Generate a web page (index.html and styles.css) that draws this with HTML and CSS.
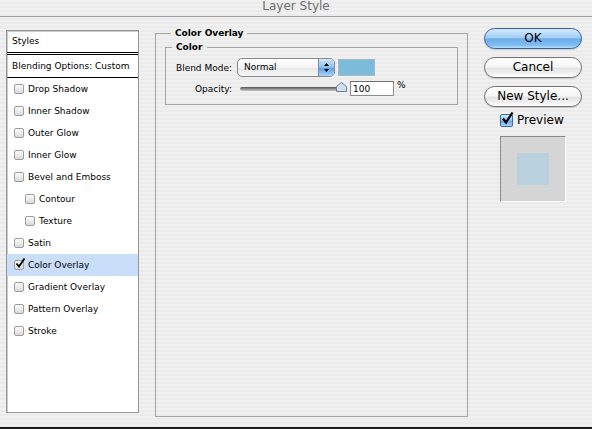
FILE: index.html
```html
<!DOCTYPE html>
<html lang="en">
<head>
<meta charset="UTF-8">
<title>Layer Style</title>
<link rel="stylesheet" href="styles.css">
</head>
<body>
<div class="window">
    <div class="titlebar">Layer Style</div>
    <div class="dialog">
        <div class="style-list">
            <div class="list-head">Styles</div>
            <div class="list-blend">Blending Options: Custom</div>
            <ul class="effects">
                <li><span class="check"></span>Drop Shadow</li>
                <li><span class="check"></span>Inner Shadow</li>
                <li><span class="check"></span>Outer Glow</li>
                <li><span class="check"></span>Inner Glow</li>
                <li><span class="check"></span>Bevel and Emboss</li>
                <li class="sub"><span class="check"></span>Contour</li>
                <li class="sub"><span class="check"></span>Texture</li>
                <li><span class="check"></span>Satin</li>
                <li class="selected"><span class="check"><svg width="12" height="12" viewBox="0 0 12 12"><path d="M2.5 5.5 L5 8.5 L10.5 0.5" fill="none" stroke="#000" stroke-width="1.8"/></svg></span>Color Overlay</li>
                <li><span class="check"></span>Gradient Overlay</li>
                <li><span class="check"></span>Pattern Overlay</li>
                <li><span class="check"></span>Stroke</li>
            </ul>
        </div>

        <fieldset class="group">
            <legend>Color Overlay</legend>
            <fieldset class="subgroup">
                <legend>Color</legend>
                <div class="form-grid">
                    <label>Blend Mode:</label>
                    <div class="row">
                        <div class="popup">
                            <span class="popup-value">Normal</span>
                            <span class="popup-arrows"><svg width="7" height="11" viewBox="0 0 7 11"><path d="M3.5 1 L6 4 L1 4 Z M3.5 10 L6 7 L1 7 Z" fill="#000"/></svg></span>
                        </div>
                        <div class="swatch"></div>
                    </div>
                    <label>Opacity:</label>
                    <div class="row">
                        <div class="slider">
                            <div class="track"></div>
                            <svg class="thumb" width="11" height="10" viewBox="0 0 11 10"><path d="M5.5 0.5 L10.5 4.5 L10.5 9.5 L0.5 9.5 L0.5 4.5 Z" fill="#cfe0f0" stroke="#6c7f93"/></svg>
                        </div>
                        <input class="num" type="text" value="100">
                        <span class="unit">%</span>
                    </div>
                </div>
            </fieldset>
        </fieldset>

        <div class="actions">
            <button class="btn default">OK</button>
            <button class="btn">Cancel</button>
            <button class="btn">New Style...</button>
            <label class="preview-toggle"><span class="aqua-check"><svg width="14" height="14" viewBox="0 0 14 14"><path d="M3 6.5 L6 10.5 L12.5 0.5" fill="none" stroke="#000" stroke-width="2.2"/></svg></span>Preview</label>
            <div class="preview"><div class="preview-swatch"></div></div>
        </div>
    </div>
</div>
</body>
</html>
```

FILE: styles.css
```css
body {
    margin: 0;
    font-family: 'DejaVu Sans', sans-serif;
    font-size: 9px;
    color: #000;
    background: #efefef;
}
.window {
    width: 592px;
    height: 429px;
    box-sizing: border-box;
    border-bottom: 2px solid #1c1c1c;
    overflow: hidden;
    background: repeating-linear-gradient(to bottom, #f0f0f0 0, #f0f0f0 2px, #ebebeb 2px, #ebebeb 4px);
}
.titlebar {
    height: 16px;
    line-height: 12px;
    text-align: center;
    font-size: 12px;
    color: #6e6e6e;
    border-bottom: 1px solid #9e9e9e;
}
.dialog {
    display: flex;
    align-items: flex-start;
    padding: 10px 0 0 6px;
}

/* style list */
.style-list {
    margin-top: 3px;
    width: 133px;
    height: 383px;
    box-sizing: border-box;
    border: 1px solid #969696;
    box-shadow: inset 1px 1px 0 #cacaca;
    background: #fff;
}
.list-head {
    height: 21px;
    line-height: 21px;
    padding-left: 5px;
    border-bottom: 3px double #000;
}
.list-blend {
    height: 22px;
    line-height: 22px;
    padding-left: 5px;
    border-bottom: 1px solid #000;
}
.effects {
    list-style: none;
    margin: 0;
    padding: 0;
}
.effects li {
    height: 22px;
    display: flex;
    align-items: center;
    gap: 4px;
    padding-left: 7px;
}
.effects li.sub {
    padding-left: 18px;
}
.effects li.selected {
    background: #cadef9;
}
.check {
    position: relative;
    width: 10px;
    height: 10px;
    box-sizing: border-box;
    border: 1px solid #9d9d9d;
    border-radius: 2px;
    background: linear-gradient(#fdfdfd, #d9d9d9);
}
.check svg {
    position: absolute;
    left: -1px;
    top: -3px;
}

/* groups */
.group {
    margin: 0 0 0 16px;
    padding: 1px 9px 0;
    width: 313px;
    height: 390px;
    box-sizing: border-box;
    border: 1px solid #a5a5a5;
    min-width: 0;
}
.group legend,
.subgroup legend {
    padding: 0 4px;
    margin-left: 6px;
    line-height: 13px;
    font-weight: bold;
}
.subgroup {
    margin: 0;
    padding: 4px 0 8px;
    border: 1px solid #a5a5a5;
    min-width: 0;
}
.form-grid {
    display: grid;
    grid-template-columns: 66px 1fr;
    column-gap: 5px;
    row-gap: 4px;
}
.form-grid label {
    justify-self: end;
    align-self: center;
}
.row {
    display: flex;
    align-items: center;
}
.popup {
    display: flex;
    width: 98px;
    height: 19px;
    box-sizing: border-box;
    border: 1px solid #8a8a8a;
    border-radius: 5px;
    overflow: hidden;
    background: linear-gradient(#ffffff, #f4f4f4 50%, #e6e6e6 51%, #f7f7f7);
}
.popup-value {
    flex: 1;
    line-height: 17px;
    padding-left: 6px;
}
.popup-arrows {
    width: 15px;
    display: flex;
    align-items: center;
    justify-content: center;
    border-left: 1px solid #6f8fb8;
    background: linear-gradient(#d3e6fa, #8dbdf0 50%, #5c9de6 51%, #a9d3f8);
}
.swatch {
    margin-left: 3px;
    width: 37px;
    height: 17px;
    box-sizing: border-box;
    border: 1px solid #a3b9c5;
    background: #7dbcd9;
}
.slider {
    position: relative;
    margin-left: 3px;
    width: 107px;
    height: 15px;
    display: flex;
    align-items: center;
}
.track {
    width: 104px;
    height: 4px;
    border-radius: 2px;
    background: linear-gradient(#555, #9a9a9a 60%, #cfcfcf);
}
.thumb {
    position: absolute;
    right: 0;
    top: 1px;
}
.num {
    margin-left: 3px;
    width: 44px;
    height: 15px;
    box-sizing: border-box;
    border: 1px solid #8c8c8c;
    border-top-color: #6d6d6d;
    padding: 0 2px;
    font-family: 'DejaVu Sans', sans-serif;
    font-size: 9px;
    background: #fff;
}
.unit {
    margin-left: 3px;
    align-self: flex-start;
    margin-top: -1px;
}

/* buttons and preview */
.actions {
    margin: 1px 0 0 16px;
    width: 98px;
    display: flex;
    flex-direction: column;
}
.btn {
    height: 21px;
    margin: 0 0 8px;
    padding: 0;
    box-sizing: border-box;
    border: 1px solid #707070;
    border-radius: 11px;
    font-family: 'DejaVu Sans', sans-serif;
    font-size: 12px;
    line-height: 19px;
    color: #000;
    background: linear-gradient(#ffffff, #f6f6f6 45%, #e4e4e4 55%, #f3f3f3 85%, #ffffff);
    box-shadow: 0 1px 1px rgba(0, 0, 0, 0.15);
}
.btn.default {
    border-color: #37609e;
    background: linear-gradient(#d6eafc, #a2cff5 45%, #6eaceb 52%, #7fbcf1 85%, #b7e0fd);
}
.preview-toggle {
    margin: -3px 0 0 16px;
    display: flex;
    align-items: center;
    gap: 4px;
    font-size: 12px;
    height: 16px;
}
.aqua-check {
    position: relative;
    width: 13px;
    height: 13px;
    box-sizing: border-box;
    border: 1px solid #3e6aa3;
    border-radius: 2px;
    background: linear-gradient(#d4e8fb, #8ec2f2 50%, #5d9fe7 51%, #a6d5f9);
}
.aqua-check svg {
    position: absolute;
    left: -1px;
    top: -3px;
}
.preview {
    margin: 8px 0 0 16px;
    width: 66px;
    height: 66px;
    box-sizing: border-box;
    padding: 16px;
    border: 1px solid #fff;
    border-top-color: #8a8a8a;
    border-left-color: #8a8a8a;
    background: #d5d5d5;
}
.preview-swatch {
    width: 32px;
    height: 32px;
    background: #b9d0de;
}
```
